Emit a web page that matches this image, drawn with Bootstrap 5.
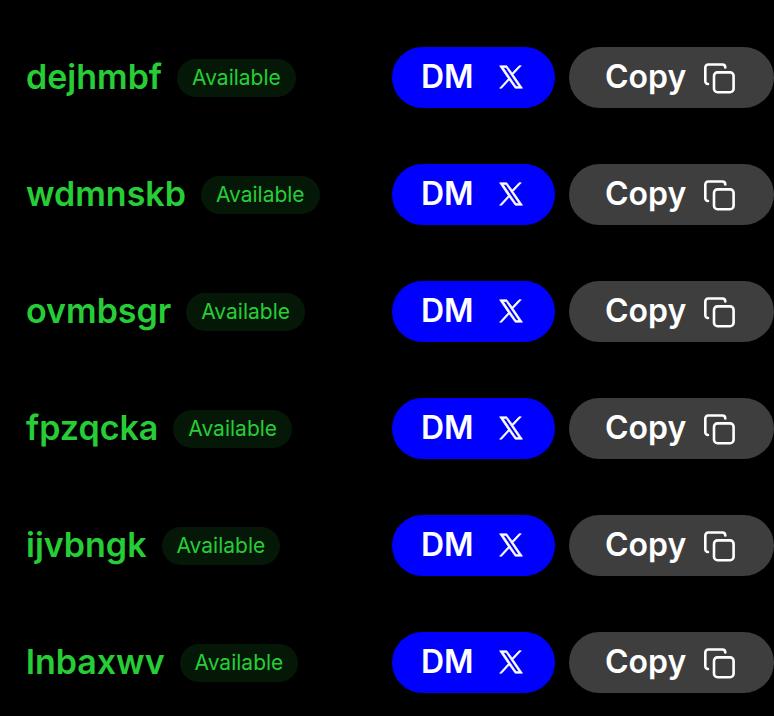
<!DOCTYPE html>
<html lang="en">
<head>
<meta charset="utf-8">
<meta name="viewport" content="width=device-width, initial-scale=1">
<title>Available usernames</title>
<link href="https://cdn.jsdelivr.net/npm/bootstrap@5.3.0/dist/css/bootstrap.min.css" rel="stylesheet">
<style>
  body { background: #000; font-family: Inter, "Liberation Sans", sans-serif; overflow-x: hidden; }
  .handle-list { padding: 19px 0 0 26px; }
  .handle-row { height: 117px; }
  .handle-main { gap: 15px; }
  .handle-actions { gap: 14px; }
  .handle-name { color: #27cd36; font-size: 34px; line-height: 44px; font-weight: 600; padding-bottom: 1px; }
  .status-pill { color: #27cd36; background: #051807; font-size: 21px; line-height: 26px; font-weight: 400; padding: 6px 15px; }
  .action-btn { --bs-btn-color: #fff; --bs-btn-hover-color: #fff; --bs-btn-active-color: #fff; height: 61px; border: 0; font-size: 32px; line-height: 40px; font-weight: 600; }
  .action-dm { --bs-btn-bg: #0000ff; --bs-btn-hover-bg: #0000dd; --bs-btn-active-bg: #0000bb; width: 163px; padding: 0 32px 2px 29px; }
  .action-copy { --bs-btn-bg: #3e3e3e; --bs-btn-hover-bg: #4a4a4a; --bs-btn-active-bg: #333; width: 205px; padding: 0 38px 2px 36px; }
</style>
</head>
<body>
<svg class="d-none" xmlns="http://www.w3.org/2000/svg">
  <symbol id="icon-x" viewBox="0 0 24 24"><path fill="currentColor" stroke="currentColor" stroke-width=".7" fill-rule="evenodd" d="M.6.8h7.200l5.400 7.300L20 .8h2.300l-8.200 8.700L23.500 23.200h-7.300l-6-8.200-7.500 8.200H.6l8.700-9.500zM4.200 2.600 17 21.400h3L7.200 2.600z"/></symbol>
  <symbol id="icon-copy" viewBox="0 0 32 34"><g fill="none" stroke="currentColor" stroke-width="2.600" stroke-linecap="round" stroke-linejoin="round"><rect x="10" y="12.400" width="19.600" height="19.800" rx="3.500"/><path d="M4 24c-1.700 0-2.700-1.200-2.700-2.800V7.500c0-1.800 1.200-3 3-3h14c1.800 0 3 1.200 3 3"/></g></symbol>
</svg>
<main>
  <ul class="handle-list list-unstyled m-0">
    <li class="handle-row d-flex align-items-center justify-content-between">
      <div class="handle-main d-flex align-items-center"><span class="handle-name">dejhmbf</span><span class="status-pill badge rounded-pill">Available</span></div>
      <div class="handle-actions d-flex flex-shrink-0">
        <button type="button" class="btn rounded-pill action-btn action-dm d-flex align-items-center justify-content-between">DM <svg width="24" height="24" role="img" aria-label="X"><use href="#icon-x"/></svg></button>
        <button type="button" class="btn rounded-pill action-btn action-copy d-flex align-items-center justify-content-between">Copy <svg width="32" height="34" aria-hidden="true"><use href="#icon-copy"/></svg></button>
      </div>
    </li>
    <li class="handle-row d-flex align-items-center justify-content-between">
      <div class="handle-main d-flex align-items-center"><span class="handle-name">wdmnskb</span><span class="status-pill badge rounded-pill">Available</span></div>
      <div class="handle-actions d-flex flex-shrink-0">
        <button type="button" class="btn rounded-pill action-btn action-dm d-flex align-items-center justify-content-between">DM <svg width="24" height="24" role="img" aria-label="X"><use href="#icon-x"/></svg></button>
        <button type="button" class="btn rounded-pill action-btn action-copy d-flex align-items-center justify-content-between">Copy <svg width="32" height="34" aria-hidden="true"><use href="#icon-copy"/></svg></button>
      </div>
    </li>
    <li class="handle-row d-flex align-items-center justify-content-between">
      <div class="handle-main d-flex align-items-center"><span class="handle-name">ovmbsgr</span><span class="status-pill badge rounded-pill">Available</span></div>
      <div class="handle-actions d-flex flex-shrink-0">
        <button type="button" class="btn rounded-pill action-btn action-dm d-flex align-items-center justify-content-between">DM <svg width="24" height="24" role="img" aria-label="X"><use href="#icon-x"/></svg></button>
        <button type="button" class="btn rounded-pill action-btn action-copy d-flex align-items-center justify-content-between">Copy <svg width="32" height="34" aria-hidden="true"><use href="#icon-copy"/></svg></button>
      </div>
    </li>
    <li class="handle-row d-flex align-items-center justify-content-between">
      <div class="handle-main d-flex align-items-center"><span class="handle-name">fpzqcka</span><span class="status-pill badge rounded-pill">Available</span></div>
      <div class="handle-actions d-flex flex-shrink-0">
        <button type="button" class="btn rounded-pill action-btn action-dm d-flex align-items-center justify-content-between">DM <svg width="24" height="24" role="img" aria-label="X"><use href="#icon-x"/></svg></button>
        <button type="button" class="btn rounded-pill action-btn action-copy d-flex align-items-center justify-content-between">Copy <svg width="32" height="34" aria-hidden="true"><use href="#icon-copy"/></svg></button>
      </div>
    </li>
    <li class="handle-row d-flex align-items-center justify-content-between">
      <div class="handle-main d-flex align-items-center"><span class="handle-name">ijvbngk</span><span class="status-pill badge rounded-pill">Available</span></div>
      <div class="handle-actions d-flex flex-shrink-0">
        <button type="button" class="btn rounded-pill action-btn action-dm d-flex align-items-center justify-content-between">DM <svg width="24" height="24" role="img" aria-label="X"><use href="#icon-x"/></svg></button>
        <button type="button" class="btn rounded-pill action-btn action-copy d-flex align-items-center justify-content-between">Copy <svg width="32" height="34" aria-hidden="true"><use href="#icon-copy"/></svg></button>
      </div>
    </li>
    <li class="handle-row d-flex align-items-center justify-content-between">
      <div class="handle-main d-flex align-items-center"><span class="handle-name">lnbaxwv</span><span class="status-pill badge rounded-pill">Available</span></div>
      <div class="handle-actions d-flex flex-shrink-0">
        <button type="button" class="btn rounded-pill action-btn action-dm d-flex align-items-center justify-content-between">DM <svg width="24" height="24" role="img" aria-label="X"><use href="#icon-x"/></svg></button>
        <button type="button" class="btn rounded-pill action-btn action-copy d-flex align-items-center justify-content-between">Copy <svg width="32" height="34" aria-hidden="true"><use href="#icon-copy"/></svg></button>
      </div>
    </li>
  </ul>
</main>
<script src="https://cdn.jsdelivr.net/npm/bootstrap@5.3.0/dist/js/bootstrap.bundle.min.js"></script>
</body>
</html>
